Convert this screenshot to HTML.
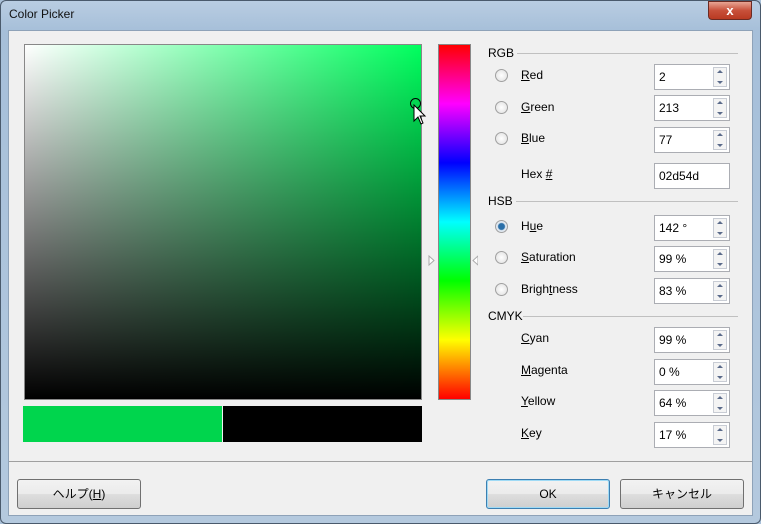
<!DOCTYPE html>
<html><head><style>
*{box-sizing:border-box;margin:0;padding:0}
body{width:761px;height:524px;overflow:hidden;background:#a9c0d8;font-family:"Liberation Sans","Noto Sans CJK JP",sans-serif;font-size:12px;color:#000;position:relative}
.frame{position:absolute;left:0;top:0;width:761px;height:524px;border:1px solid #4a5a6c;border-radius:6px;background:linear-gradient(180deg,#b9cde2 0,#a6bfd9 30px,#b4c9de 100%)}
.title{position:absolute;left:9px;top:7px;font-size:12px;color:#111}
.close{position:absolute;left:708px;top:1px;width:44px;height:19px;border:1px solid #6b2a22;border-radius:0 0 4px 4px;background:linear-gradient(#e8a594,#c8503a 50%,#b93a22);color:#fff;font-weight:bold;text-align:center;line-height:17px;font-size:13px}
.client{position:absolute;left:8px;top:30px;width:745px;height:486px;background:#f0f0f0;border:1px solid #8ea2b8}
.a{position:absolute}
.field{left:24px;top:44px;width:398px;height:356px;border:1px solid #888;background:linear-gradient(to bottom,rgba(0,0,0,0),#000),linear-gradient(to right,#fff,rgba(255,255,255,0)),#00ff5e}
.hue{left:438px;top:44px;width:33px;height:356px;border:1px solid #888;background:linear-gradient(#ff0000,#ff00ff 16.6%,#0000ff 33.3%,#00ffff 50%,#00ff00 66.6%,#ffff00 83.3%,#ff0000)}
.lbl{font-size:12px}
.u{text-decoration:underline}
.hdr{font-size:12px}
.line{height:1px;background:#c0c0c0}
.radio{width:13px;height:13px;border-radius:50%;border:1px solid #a0a0a0;background:radial-gradient(#fff,#ddd)}
.sel{background:radial-gradient(#2a6fa8 0,#2a6fa8 3px,#e0e8f0 4px)}
.box{left:654px;width:76px;height:26px;border:1px solid #abadb3;background:#fff;padding:5px 0 0 4px}
.sp{position:absolute;right:2px;top:2px;width:14px;height:20px;border:1px solid #c8ccd4;background:#f4f4f4}
.sp:before{content:"";position:absolute;left:3px;top:2px;border:3px solid transparent;border-bottom:3px solid #5a6a8a;border-top:0}
.sp:after{content:"";position:absolute;left:3px;top:13px;border:3px solid transparent;border-top:3px solid #5a6a8a;border-bottom:0}
.btn{height:30px;border:1px solid #707070;border-radius:3px;background:linear-gradient(#f2f2f2 0,#ebebeb 50%,#dddddd 51%,#cfcfcf);text-align:center;line-height:28px}
</style></head><body>
<div class="frame"></div>
<div class="title">Color Picker</div>
<div class="close">x</div>
<div class="client"></div>
<div class="a field"></div>
<div class="a" style="left:410px;top:98px;width:11px;height:11px;border:1px solid #000;border-radius:50%"></div>
<svg class="a" style="left:413px;top:104px" width="14" height="22"><path d="M1 1 L1 17 L5 13 L8 20 L10 19 L7 12 L12 12 Z" fill="#fff" stroke="#000"/></svg>
<div class="a hue"></div>
<svg class="a" style="left:428px;top:255px" width="50" height="12"><path d="M1 1 L6 5.5 L1 10 Z" fill="#fff" stroke="#aaa"/><path d="M50 1 L45 5.5 L50 10 Z" fill="#fff" stroke="#aaa"/></svg>
<div class="a" style="left:23px;top:406px;width:199px;height:36px;background:#00d54d"></div>
<div class="a" style="left:223px;top:406px;width:199px;height:36px;background:#000"></div>

<div class="a hdr" style="left:488px;top:46px">RGB</div><div class="a line" style="left:517px;top:53px;width:221px"></div>
<div class="a hdr" style="left:488px;top:194px">HSB</div><div class="a line" style="left:516px;top:201px;width:222px"></div>
<div class="a hdr" style="left:488px;top:309px">CMYK</div><div class="a line" style="left:523px;top:316px;width:215px"></div>

<div class="a radio" style="left:495px;top:69px"></div><div class="a lbl" style="left:521px;top:68px"><span class="u">R</span>ed</div>
<div class="a radio" style="left:495px;top:101px"></div><div class="a lbl" style="left:521px;top:100px"><span class="u">G</span>reen</div>
<div class="a radio" style="left:495px;top:132px"></div><div class="a lbl" style="left:521px;top:131px"><span class="u">B</span>lue</div>
<div class="a lbl" style="left:521px;top:167px">Hex <span class="u">#</span></div>
<div class="a radio sel" style="left:495px;top:220px"></div><div class="a lbl" style="left:521px;top:219px">H<span class="u">u</span>e</div>
<div class="a radio" style="left:495px;top:251px"></div><div class="a lbl" style="left:521px;top:250px"><span class="u">S</span>aturation</div>
<div class="a radio" style="left:495px;top:283px"></div><div class="a lbl" style="left:521px;top:282px">Brigh<span class="u">t</span>ness</div>
<div class="a lbl" style="left:521px;top:331px"><span class="u">C</span>yan</div>
<div class="a lbl" style="left:521px;top:363px"><span class="u">M</span>agenta</div>
<div class="a lbl" style="left:521px;top:394px"><span class="u">Y</span>ellow</div>
<div class="a lbl" style="left:521px;top:426px"><span class="u">K</span>ey</div>

<div class="a box" style="top:64px">2<div class="sp"></div></div>
<div class="a box" style="top:95px">213<div class="sp"></div></div>
<div class="a box" style="top:127px">77<div class="sp"></div></div>
<div class="a box" style="top:163px">02d54d</div>
<div class="a box" style="top:215px">142 °<div class="sp"></div></div>
<div class="a box" style="top:246px">99 %<div class="sp"></div></div>
<div class="a box" style="top:278px">83 %<div class="sp"></div></div>
<div class="a box" style="top:327px">99 %<div class="sp"></div></div>
<div class="a box" style="top:359px">0 %<div class="sp"></div></div>
<div class="a box" style="top:390px">64 %<div class="sp"></div></div>
<div class="a box" style="top:422px">17 %<div class="sp"></div></div>

<div class="a line" style="left:9px;top:461px;width:743px;background:#a0a0a0"></div>
<div class="a btn" style="left:17px;top:479px;width:124px">ヘルプ(<span class="u">H</span>)</div>
<div class="a btn" style="left:486px;top:479px;width:124px;border-color:#3c7fb1;box-shadow:inset 0 0 0 1px #9fdaf5">OK</div>
<div class="a btn" style="left:620px;top:479px;width:124px">キャンセル</div>
</body></html>
